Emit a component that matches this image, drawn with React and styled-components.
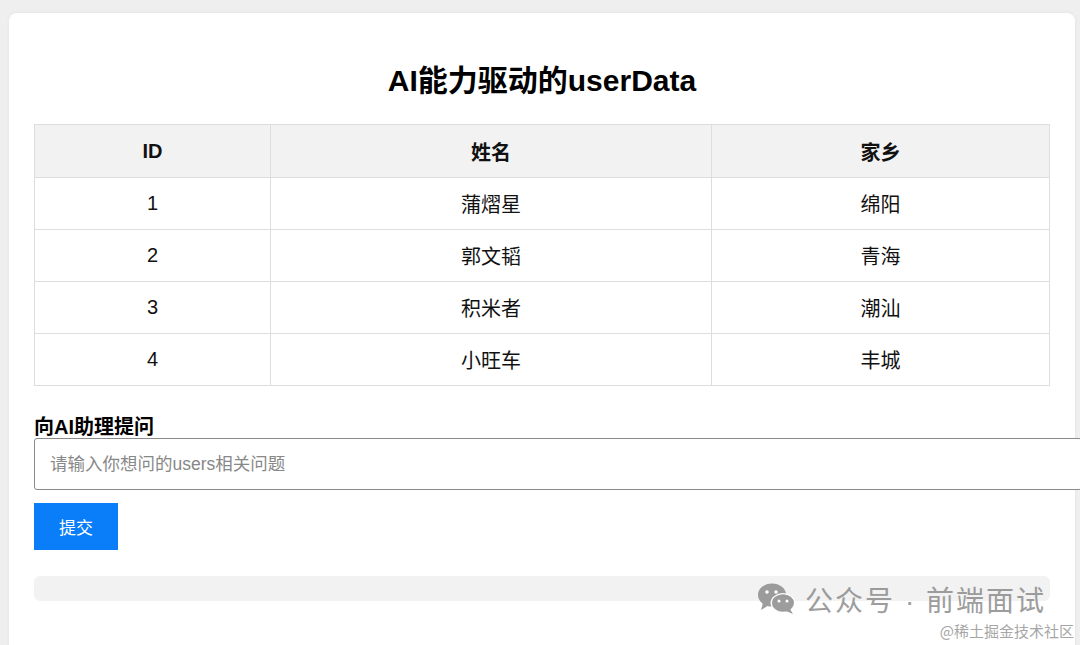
import React from "react"
import styled, { createGlobalStyle } from "styled-components"

const GlobalStyle = createGlobalStyle`
  html, body {
    margin: 0;
    padding: 0;
    background: #efefef;
    font-family: "Liberation Sans", "Noto Sans CJK SC", Arial, sans-serif;
    color: #111;
    overflow: hidden;
  }
`

const Page = styled.div`
  padding: 13px 5px 0 9px;
  height: 645px;
  box-sizing: border-box;
  position: relative;
`

const Card = styled.main`
  background: #fff;
  border-radius: 8px;
  padding: 22px 25px 40px 25px;
  min-height: 700px;
  box-shadow: 0 0 4px rgba(0, 0, 0, 0.06);
`

const Title = styled.h1`
  margin: 29px 0 26px;
  text-align: center;
  font-size: 30px;
  font-weight: 700;
  line-height: 34px;
  color: #000;
`

const Table = styled.table`
  width: 100%;
  border-collapse: collapse;
  font-size: 20px;
  margin-bottom: 30px;
`

const Th = styled.th`
  background: #f2f2f2;
  border: 1px solid #ddd;
  height: 50px;
  font-weight: 700;
  width: ${p => p.$w};
`

const Td = styled.td`
  border: 1px solid #ddd;
  height: 49px;
  text-align: center;
`

const Label = styled.label`
  display: block;
  font-size: 20px;
  font-weight: 700;
  line-height: 22px;
  color: #000;
`

const Input = styled.input`
  display: block;
  width: 100%;
  height: 50px;
  padding: 0 15px;
  border: 1px solid #8a8a8a;
  border-radius: 3px;
  font-family: inherit;
  font-size: 17.5px;
  color: #222;
  margin-bottom: 13px;
  &::placeholder {
    color: #888;
  }
`

const Button = styled.button`
  display: block;
  width: 84px;
  height: 47px;
  border: none;
  background: #0a7df9;
  color: #fff;
  font-family: inherit;
  font-size: 17px;
  margin-bottom: 26px;
`

const Result = styled.div`
  height: 25px;
  background: #f2f2f2;
  border-radius: 6px;
`

const Watermark = styled.div`
  position: absolute;
  right: 34px;
  bottom: 26px;
  display: flex;
  align-items: center;
  gap: 8px;
  color: #8c8c8c;
  font-size: 28px;
  letter-spacing: 2px;
  opacity: 0.85;
`

const Credit = styled.div`
  position: absolute;
  right: 6px;
  bottom: 4px;
  color: #a6a6a6;
  font-family: "Noto Sans CJK SC", "Liberation Serif", serif;
  font-size: 15px;
`

const users = [
  { id: 1, name: "蒲熠星", home: "绵阳" },
  { id: 2, name: "郭文韬", home: "青海" },
  { id: 3, name: "积米者", home: "潮汕" },
  { id: 4, name: "小旺车", home: "丰城" },
]

const WeChat = () => (
  <svg width="40" height="34" viewBox="0 0 40 34">
    <ellipse cx="15" cy="13" rx="14" ry="11.5" fill="#8c8c8c" />
    <path d="M6 21 L4 28 L12 23 Z" fill="#8c8c8c" />
    <ellipse cx="26" cy="21" rx="12.5" ry="10" fill="#fff" />
    <ellipse cx="26" cy="21" rx="11" ry="8.8" fill="#8c8c8c" />
    <path d="M33 27 L36 32 L29 29 Z" fill="#8c8c8c" />
    <circle cx="10" cy="10" r="1.8" fill="#fff" />
    <circle cx="19" cy="10" r="1.8" fill="#fff" />
    <circle cx="22" cy="19" r="1.5" fill="#fff" />
    <circle cx="30" cy="19" r="1.5" fill="#fff" />
  </svg>
)

export default function App() {
  return (
    <Page>
      <GlobalStyle />
      <Card>
        <Title>AI能力驱动的userData</Title>
        <Table>
          <thead>
            <tr>
              <Th $w="233px">ID</Th>
              <Th $w="438px">姓名</Th>
              <Th>家乡</Th>
            </tr>
          </thead>
          <tbody>
            {users.map(u => (
              <tr key={u.id}>
                <Td>{u.id}</Td>
                <Td>{u.name}</Td>
                <Td>{u.home}</Td>
              </tr>
            ))}
          </tbody>
        </Table>
        <Label htmlFor="q">向AI助理提问</Label>
        <Input id="q" placeholder="请输入你想问的users相关问题" />
        <Button>提交</Button>
        <Result />
      </Card>
      <Watermark>
        <WeChat />
        <span>公众号 · 前端面试</span>
      </Watermark>
      <Credit>@稀土掘金技术社区</Credit>
    </Page>
  )
}
